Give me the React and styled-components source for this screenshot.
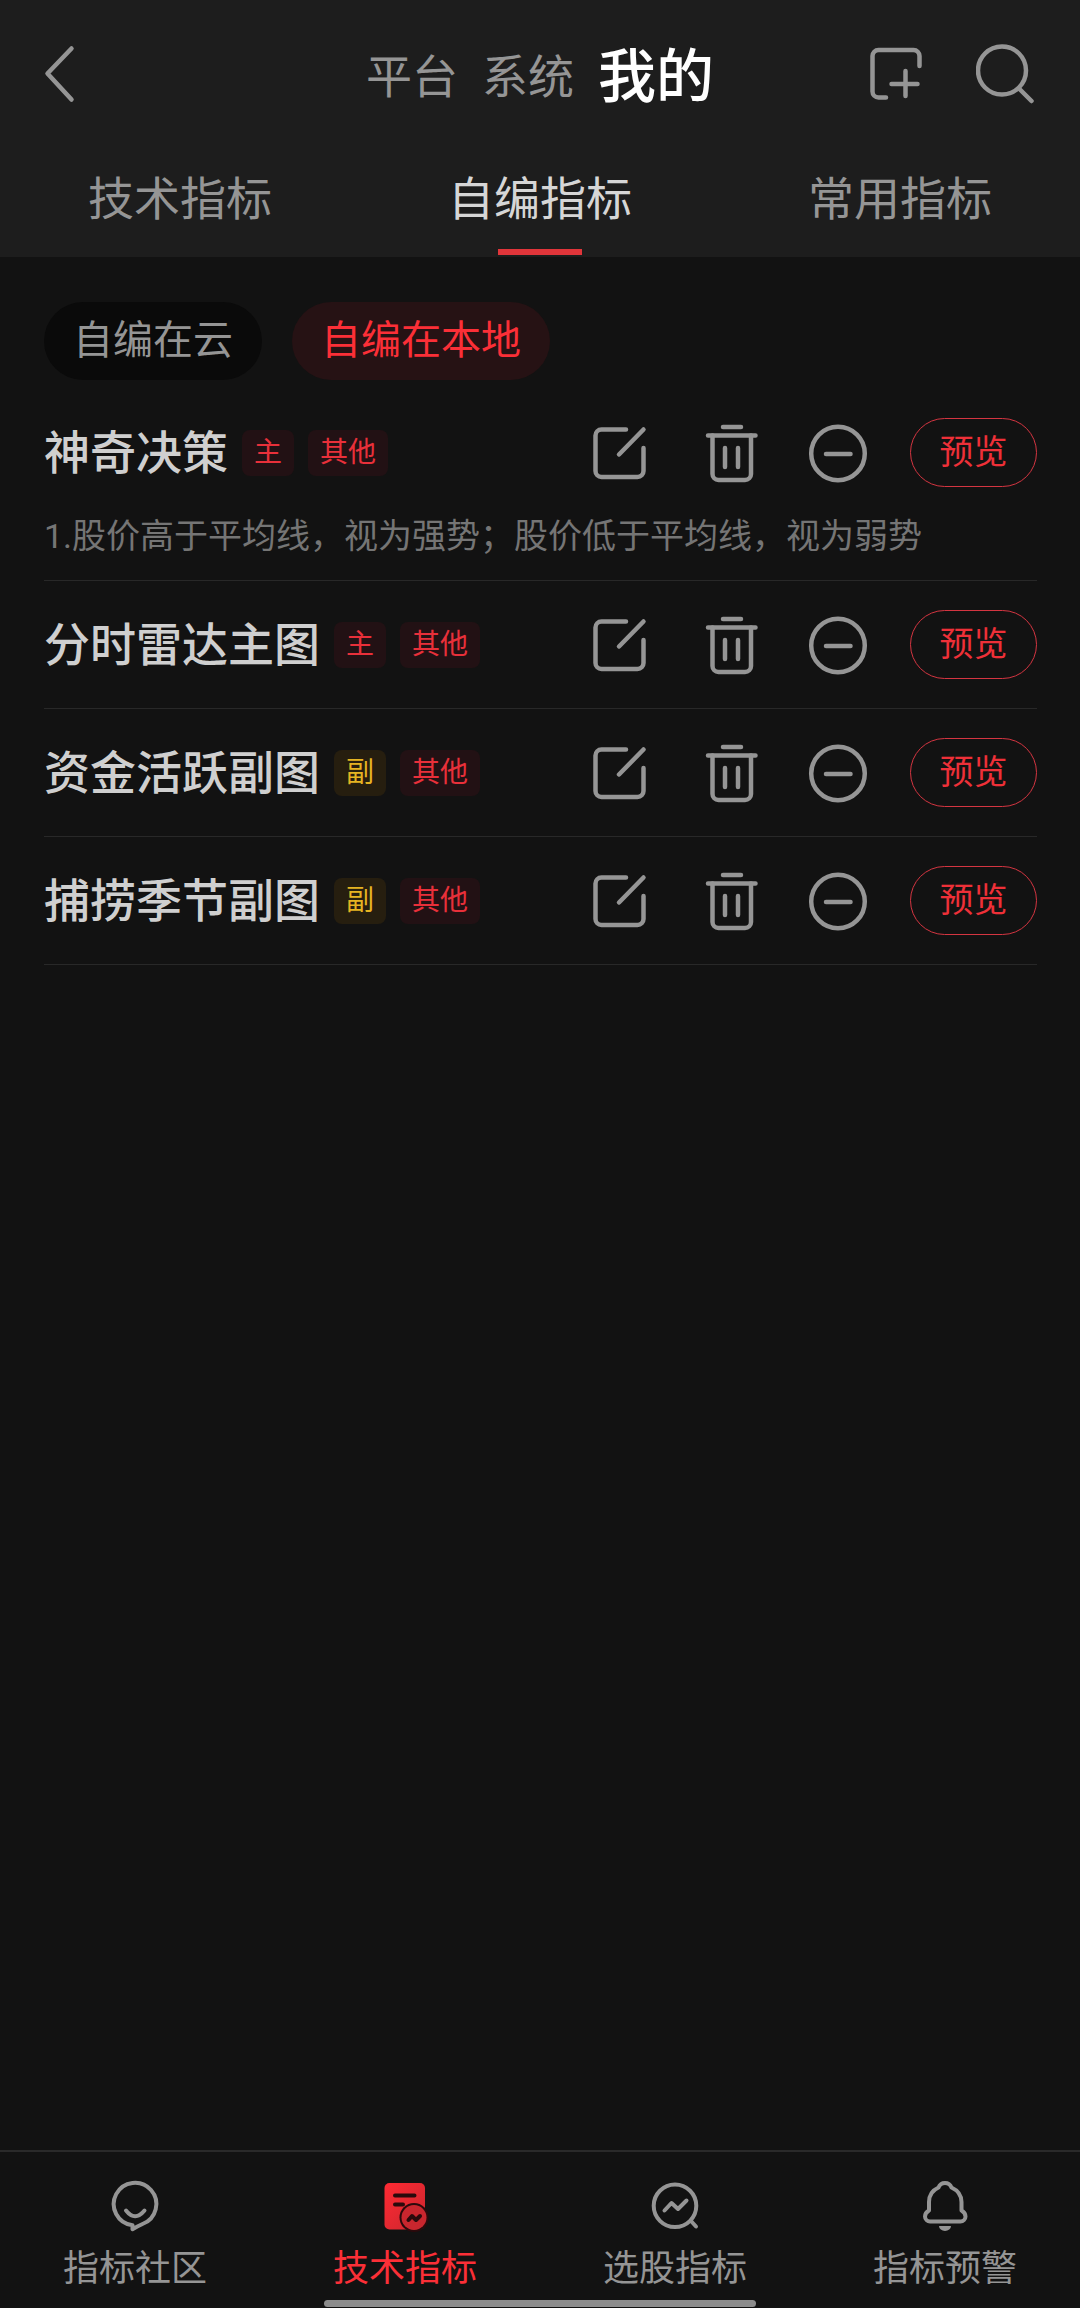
import React, { useState } from "react";
import styled, { createGlobalStyle } from "styled-components";

const indicators = [
  {
    name: "神奇决策",
    kind: "主",
    group: "其他",
    note: "1.股价高于平均线，视为强势；股价低于平均线，视为弱势",
  },
  { name: "分时雷达主图", kind: "主", group: "其他" },
  { name: "资金活跃副图", kind: "副", group: "其他" },
  { name: "捕捞季节副图", kind: "副", group: "其他" },
];

const scopes = ["平台", "系统", "我的"];
const tabs = ["技术指标", "自编指标", "常用指标"];
const sources = ["自编在云", "自编在本地"];

const App = () => {
  const [scope, setScope] = useState("我的");
  const [tab, setTab] = useState("自编指标");
  const [source, setSource] = useState("自编在本地");

  return (
    <Page>
      <GlobalStyle />
      <Header>
        <TitleBar>
          <IconButton aria-label="返回">
            <BackIcon />
          </IconButton>
          <Scopes>
            {scopes.map((item) => (
              <Scope
                key={item}
                $active={item === scope}
                onClick={() => setScope(item)}
              >
                {item}
              </Scope>
            ))}
          </Scopes>
          <TitleActions>
            <IconButton aria-label="新建">
              <AddIcon />
            </IconButton>
            <IconButton aria-label="搜索">
              <SearchIcon />
            </IconButton>
          </TitleActions>
        </TitleBar>
        <Tabs>
          {tabs.map((item) => (
            <Tab key={item} $active={item === tab} onClick={() => setTab(item)}>
              {item}
            </Tab>
          ))}
        </Tabs>
      </Header>

      <Main>
        <Filters>
          {sources.map((item) => (
            <Pill
              key={item}
              $active={item === source}
              onClick={() => setSource(item)}
            >
              {item}
            </Pill>
          ))}
        </Filters>
        <List>
          {indicators.map((item) => (
            <Item key={item.name}>
              <Row>
                <Name>{item.name}</Name>
                <Badge $gold={item.kind === "副"}>{item.kind}</Badge>
                <Badge>{item.group}</Badge>
                <Actions>
                  <IconButton aria-label="编辑">
                    <EditIcon />
                  </IconButton>
                  <IconButton aria-label="删除">
                    <TrashIcon />
                  </IconButton>
                  <IconButton aria-label="移除">
                    <MinusIcon />
                  </IconButton>
                </Actions>
                <Preview>预览</Preview>
              </Row>
              {item.note && <Note>{item.note}</Note>}
            </Item>
          ))}
        </List>
      </Main>

      <BottomNav>
        <NavItem href="#community">
          <CommunityIcon />
          指标社区
        </NavItem>
        <NavItem href="#technical" $active>
          <TechnicalIcon />
          技术指标
        </NavItem>
        <NavItem href="#picks">
          <PicksIcon />
          选股指标
        </NavItem>
        <NavItem href="#alerts">
          <BellIcon />
          指标预警
        </NavItem>
        <HomeIndicator />
      </BottomNav>
    </Page>
  );
};

export default App;

// Icons
const BackIcon = () => (
  <Icon viewBox="0 0 60 60">
    <path d="M27.5 4.5 3.5 29.5l24 26" />
  </Icon>
);

const AddIcon = () => (
  <Icon viewBox="0 0 60 60">
    <path d="M51.5 22V12a6 6 0 0 0-6-6H10.5a6 6 0 0 0-6 6v35.5a6 6 0 0 0 6 6H18" />
    <path d="M23.5 40h26M37.5 27v25" />
  </Icon>
);

const SearchIcon = () => (
  <Icon viewBox="0 0 60 60">
    <circle cx="26" cy="26.5" r="24" />
    <path d="M43 44.5 55.5 57" />
  </Icon>
);

const EditIcon = () => (
  <Icon viewBox="0 0 60 60">
    <path d="M34 6.5H9.5a6 6 0 0 0-6 6V48a6 6 0 0 0 6 6h36a6 6 0 0 0 6-6V25" />
    <path d="M27 31.5 51.5 6.5" />
  </Icon>
);

const TrashIcon = () => (
  <Icon viewBox="0 0 60 60">
    <path d="M23 4h18M8 12.5h47.500" />
    <path d="M12.5 12.5V51a6 6 0 0 0 6 6H45a6 6 0 0 0 6-6V12.5" />
    <path d="M25 25v19M38 25v19" />
  </Icon>
);

const MinusIcon = () => (
  <Icon viewBox="0 0 60 60">
    <circle cx="30" cy="30.5" r="26.8" />
    <path d="M18 31h24.5" />
  </Icon>
);

const CommunityIcon = () => (
  <NavIcon viewBox="0 0 56 56">
    <path d="M25.5 47.2A21.3 21.3 0 1 1 35.500 46Q30 48.500 25.500 51.200Z" />
    <path d="M19 32.500q9 11.500 18.500 0" />
  </NavIcon>
);

const TechnicalIcon = () => (
  <NavIcon viewBox="0 0 56 56">
    <defs>
      <linearGradient id="sheet" x1="0" y1="0" x2="1" y2="1">
        <stop offset="0" stopColor="#ff2a33" />
        <stop offset="1" stopColor="#c9262e" />
      </linearGradient>
    </defs>
    <rect x="7.5" y="5" width="40.5" height="46.5" rx="5" fill="url(#sheet)" stroke="none" />
    <path d="M18 17.5h19.5M18 26.5h8" stroke="#2b0a0c" />
    <circle cx="37" cy="39.5" r="14.5" fill="#2b0a0c" stroke="none" />
    <circle cx="37" cy="39.5" r="12.5" fill="#c9262e" stroke="none" />
    <path d="M31.5 42l3.5-4 4 4 4-4" stroke="#2b0a0c" />
  </NavIcon>
);

const PicksIcon = () => (
  <NavIcon viewBox="0 0 56 56">
    <circle cx="28" cy="27.8" r="21.3" />
    <path d="M44 43l5 5.5M17.5 32.5l7-7.5 6.500 6 8.500-8.500" />
  </NavIcon>
);

const BellIcon = () => (
  <NavIcon viewBox="0 0 56 56">
    <path d="M28 5C24.5 5 22.5 7 21.5 9.5C15 12.5 12 18 12 24V32.5C8.5 34.5 8 36.5 8 38.5C8 41.5 10.5 43.5 13 43.5H43.5C46 43.5 48.5 41.5 48.5 38.5C48.5 36.5 48 34.5 44.5 32.5V24C44.5 18 41 12.5 34.5 9.5C33.5 7 31.5 5 28 5Z" />
    <path d="M22 48h12a6 5 0 0 1-12 0Z" fill="currentColor" stroke="none" />
  </NavIcon>
);

// Styled Components
const GlobalStyle = createGlobalStyle`
  * {
    box-sizing: border-box;
  }
  body {
    margin: 0;
    background: #121212;
    font-family: Roboto, "Noto Sans CJK SC", sans-serif;
  }
  button {
    padding: 0;
    border: none;
    background: none;
    font: inherit;
    cursor: pointer;
  }
`;

const Page = styled.div`
  min-height: 100vh;
  display: flex;
  flex-direction: column;
  background: #121212;
`;

const Header = styled.header`
  background: #1d1d1d;
`;

const TitleBar = styled.div`
  display: grid;
  grid-template-columns: 1fr auto 1fr;
  align-items: center;
  height: 148px;
  padding: 0 44px;
`;

const Icon = styled.svg`
  display: block;
  width: 60px;
  height: 60px;
  fill: none;
  stroke: currentColor;
  stroke-width: 4.5;
  stroke-linecap: round;
  stroke-linejoin: round;
`;

const NavIcon = styled(Icon)`
  width: 56px;
  height: 56px;
  margin-bottom: 12px;
  stroke-width: 4;
`;

const IconButton = styled.button`
  justify-self: start;
  color: #959595;
`;

const Scopes = styled.div`
  display: flex;
  align-items: center;
  gap: 24px;
  padding-top: 6px;
`;

const Scope = styled.button`
  font-size: ${(props) => (props.$active ? "58px" : "46px")};
  font-weight: ${(props) => (props.$active ? 500 : 400)};
  line-height: 64px;
  color: ${(props) => (props.$active ? "#ffffff" : "#959595")};
`;

const TitleActions = styled.div`
  display: flex;
  justify-content: flex-end;
  gap: 48px;
`;

const Tabs = styled.div`
  display: grid;
  grid-template-columns: repeat(3, 1fr);
`;

const Tab = styled.button`
  display: flex;
  flex-direction: column;
  align-items: center;
  padding: 24px 0 2px;
  font-size: 46px;
  line-height: 54px;
  color: ${(props) => (props.$active ? "#d6d6d6" : "#959595")};

  &::after {
    content: "";
    width: 84px;
    height: 6px;
    margin-top: 23px;
    background: ${(props) => (props.$active ? "#e0353a" : "transparent")};
  }
`;

const Main = styled.main`
  flex: 1;
  padding: 45px 43px 0 44px;
`;

const Filters = styled.div`
  display: flex;
  gap: 30px;
  margin-bottom: 9px;
`;

const Pill = styled.button`
  height: 78px;
  padding: 0 29px;
  border-radius: 39px;
  font-size: 40px;
  line-height: 78px;
  color: ${(props) => (props.$active ? "#fb2f37" : "#959595")};
  background: ${(props) => (props.$active ? "#261214" : "#0a0a0a")};
`;

const List = styled.ul`
  margin: 0;
  padding: 0;
  list-style: none;
`;

const Item = styled.li`
  border-bottom: 1px solid #282828;
`;

const Row = styled.div`
  display: flex;
  align-items: center;
  height: 127px;
`;

const Name = styled.span`
  font-size: 46px;
  font-weight: 500;
  line-height: 60px;
  color: #cfcfcf;
`;

const Badge = styled.span`
  height: 46px;
  margin-left: 14px;
  padding: 0 12px;
  border-radius: 8px;
  font-size: 28px;
  line-height: 46px;
  color: ${(props) => (props.$gold ? "#e6b422" : "#e8303a")};
  background: ${(props) => (props.$gold ? "#261e0f" : "#221114")};
`;

const Actions = styled.div`
  display: flex;
  gap: 48px;
  margin-left: auto;
`;

const Preview = styled.button`
  width: 127px;
  height: 69px;
  margin-left: 42px;
  border: 1px solid #d43541;
  border-radius: 35px;
  font-size: 34px;
  line-height: 67px;
  color: #ee3038;
`;

const Note = styled.p`
  margin: 0;
  padding-bottom: 24px;
  font-size: 34px;
  line-height: 40px;
  color: #757575;
`;

const BottomNav = styled.nav`
  position: relative;
  display: grid;
  grid-template-columns: repeat(4, 1fr);
  padding: 26px 0 16px;
  border-top: 2px solid #2a2a2a;
`;

const NavItem = styled.a`
  display: flex;
  flex-direction: column;
  align-items: center;
  font-size: 36px;
  line-height: 46px;
  text-decoration: none;
  color: ${(props) => (props.$active ? "#fb2f37" : "#959595")};
`;

const HomeIndicator = styled.div`
  position: absolute;
  bottom: 1px;
  left: 30%;
  width: 40%;
  height: 7px;
  border-radius: 4px;
  background: #8c8c8c;
`;
